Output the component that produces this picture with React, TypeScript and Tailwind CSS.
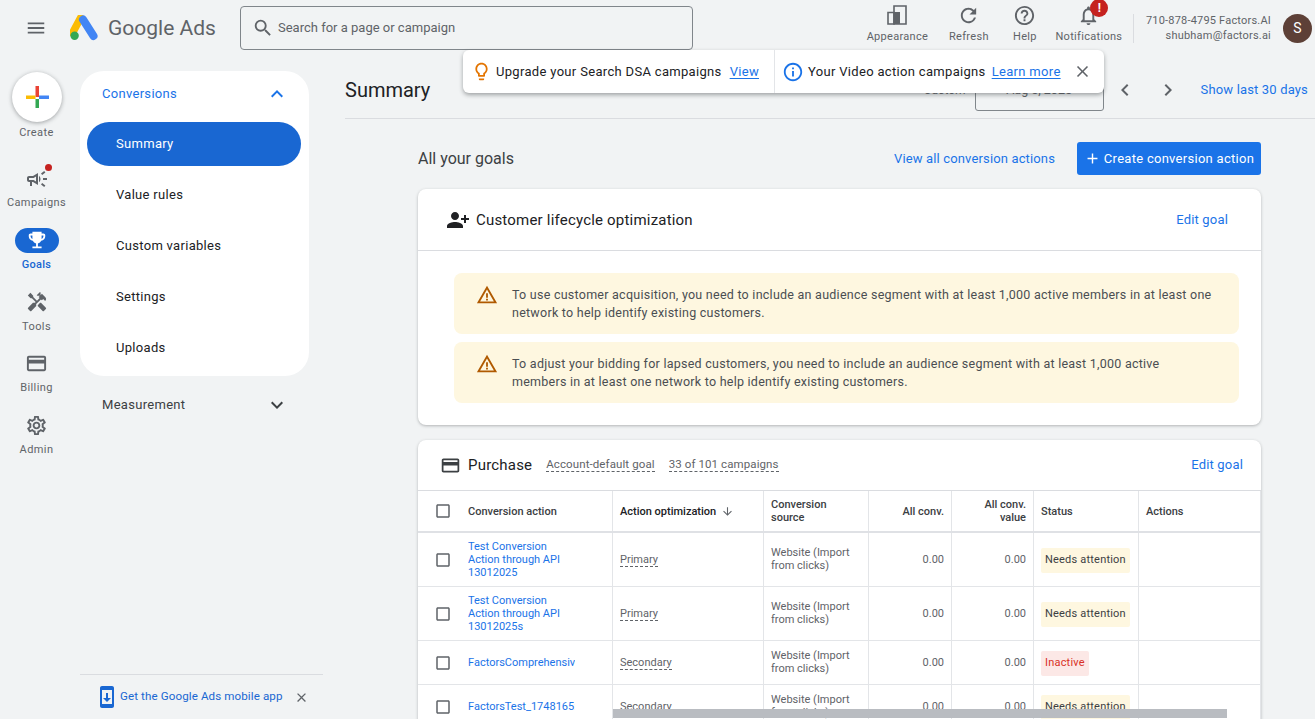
import React from "react";
import {
  MdAdd,
  MdArrowDownward,
  MdCheckBoxOutlineBlank,
  MdChevronLeft,
  MdChevronRight,
  MdClose,
  MdCreditCard,
  MdEmojiEvents,
  MdExpandLess,
  MdExpandMore,
  MdHandyman,
  MdHelpOutline,
  MdInfoOutline,
  MdLightbulbOutline,
  MdMenu,
  MdNotificationsNone,
  MdOutlineCampaign,
  MdOutlineSettings,
  MdPersonAdd,
  MdRefresh,
  MdSearch,
  MdSystemUpdate,
  MdWarningAmber,
} from "react-icons/md";

function AdsLogo() {
  return (
    <svg width="28" height="26" viewBox="0 0 28 26">
      <path d="M10.5 3 L2.5 18" stroke="#fbbc04" strokeWidth="7.5" strokeLinecap="round" />
      <path d="M13 4.5 L23.5 21" stroke="#4285f4" strokeWidth="8" strokeLinecap="round" />
      <circle cx="4.6" cy="20.7" r="4.2" fill="#34a853" />
    </svg>
  );
}

function ColorPlus() {
  return (
    <svg width="24" height="24" viewBox="0 0 24 24">
      <rect x="10.5" y="1" width="3.5" height="11" fill="#ea4335" />
      <rect x="14" y="10.5" width="10" height="3.5" fill="#4285f4" />
      <rect x="10.5" y="14" width="3.5" height="9" fill="#34a853" />
      <rect x="1" y="10.5" width="9.5" height="3.5" fill="#fbbc04" />
    </svg>
  );
}

function AppearanceIcon() {
  return (
    <svg width="20" height="20" viewBox="0 0 20 20" fill="#5f6368">
      <path d="M1 7.5h6V19H1z" fill="none" stroke="#5f6368" strokeWidth="1.6" />
      <path d="M7 1h12v18H7z" fill="none" stroke="#5f6368" strokeWidth="1.6" />
      <path d="M7 7h6v12H7z" />
    </svg>
  );
}

function RailItem({
  icon,
  label,
  active,
}: {
  icon: React.ReactNode;
  label: string;
  active?: boolean;
}) {
  return (
    <div className="flex h-[61.75px] flex-col items-center justify-start">
      <div
        className={
          active
            ? "flex h-[25px] w-[44px] items-center justify-center rounded-full bg-[#1967d2] text-white"
            : "flex h-[25px] w-[44px] items-center justify-center text-[#5f6368]"
        }
      >
        {icon}
      </div>
      <div
        className={
          active
            ? "mt-[4px] text-[11px] font-medium tracking-[0.3px] text-[#1967d2]"
            : "mt-[4px] text-[11px] tracking-[0.4px] text-[#5f6368]"
        }
      >
        {label}
      </div>
    </div>
  );
}

function HeaderAction({
  icon,
  label,
  badge,
}: {
  icon: React.ReactNode;
  label: string;
  badge?: boolean;
}) {
  return (
    <div className="relative mb-[6px] flex flex-col items-center text-[#5f6368]">
      <div className="flex h-[22px] items-center justify-center">{icon}</div>
      <div className="mt-[3px] text-[11px] tracking-[0.3px]">{label}</div>
      {badge && (
        <div className="absolute left-[35px] top-[-5px] flex h-[18px] w-[18px] items-center justify-center rounded-full bg-[#c5221f] text-[12px] font-bold text-white">
          !
        </div>
      )}
    </div>
  );
}

function Warning({ lines }: { lines: string[] }) {
  return (
    <div className="flex h-[61px] items-center rounded-[8px] bg-[#fef7e0] pl-[22px] pr-4">
      <MdWarningAmber className="mb-[18px] shrink-0 text-[#b05a00]" size={22} />
      <div className="ml-[14px] text-[12.5px] leading-[18px] tracking-[0.25px] text-[#4a4e52]">
        {lines.map((l) => (
          <div key={l}>{l}</div>
        ))}
      </div>
    </div>
  );
}

function Dashed({ children }: { children: React.ReactNode }) {
  return <span className="border-b border-dashed border-[#5f6368] leading-[13px]">{children}</span>;
}

const rows = [
  { h: "h-[54px]", name: ["Test Conversion", "Action through API", "13012025"], opt: "Primary", status: "Needs attention" },
  { h: "h-[54px]", name: ["Test Conversion", "Action through API", "13012025s"], opt: "Primary", status: "Needs attention" },
  { h: "h-[44px]", name: ["FactorsComprehensiv"], opt: "Secondary", status: "Inactive" },
  { h: "h-[44px]", name: ["FactorsTest_1748165:"], opt: "Secondary", status: "Needs attention" },
];

const gridCols = "grid grid-cols-[195px_151px_105px_83px_82px_105px_1fr]";
const cell = "flex items-center border-r border-[#e3e5e8] px-[7px]";

export default function App() {
  return (
    <div className="relative flex h-screen flex-col overflow-hidden bg-[#f1f3f4] font-['Roboto',sans-serif] text-[#202124]">
      {/* top bar */}
      <header className="flex h-[56px] shrink-0 items-center">
        <div className="flex w-[70px] justify-center pl-[1px] text-[#5f6368]">
          <MdMenu size={22} />
        </div>
        <AdsLogo />
        <div className="ml-[10px] mt-[2px] w-[132px] text-[21px] text-[#5f6368]">Google Ads</div>
        <div className="mt-[-1px] flex h-[44px] w-[453px] items-center rounded-[4px] border border-[#80868b] pl-[11px]">
          <MdSearch className="text-[#5f6368]" size={22} />
          <span className="ml-[4px] text-[13px] text-[#5f6368]">Search for a page or campaign</span>
        </div>
        <div className="ml-auto flex items-center">
          <div className="flex w-[73px] justify-center">
            <HeaderAction icon={<AppearanceIcon />} label="Appearance" />
          </div>
          <div className="flex w-[70px] justify-center">
            <HeaderAction icon={<MdRefresh size={23} />} label="Refresh" />
          </div>
          <div className="flex w-[42px] justify-center">
            <HeaderAction icon={<MdHelpOutline size={23} />} label="Help" />
          </div>
          <div className="ml-[5px] flex w-[76px] justify-center">
            <HeaderAction icon={<MdNotificationsNone size={23} />} label="Notifications" badge />
          </div>
          <div className="ml-[6px] h-[29px] w-px bg-[#dadce0]" />
          <div className="ml-[12px] text-right text-[11px] leading-[15px] tracking-[0.2px] text-[#5f6368]">
            <div>710-878-4795 Factors.AI</div>
            <div>shubham@factors.ai</div>
          </div>
          <div className="ml-[12px] mr-[3px] flex h-[29px] w-[29px] items-center justify-center rounded-full bg-[#5d4037] text-[14px] text-white">
            S
          </div>
        </div>
      </header>

      <div className="flex min-h-0 flex-1">
        {/* icon rail */}
        <div className="flex w-[73px] shrink-0 flex-col items-center pt-[16px]">
          <div className="flex h-[50px] w-[50px] items-center justify-center rounded-full bg-white shadow-[0_1px_4px_rgba(60,64,67,0.45)]">
            <ColorPlus />
          </div>
          <div className="mt-[3px] h-[41px] text-[11px] tracking-[0.4px] text-[#5f6368]">Create</div>
          <div className="relative">
            <RailItem icon={<MdOutlineCampaign size={24} />} label="Campaigns" />
            <div className="absolute left-[38px] top-[-2px] h-[7px] w-[7px] rounded-full bg-[#c5221f]" />
          </div>
          <RailItem icon={<MdEmojiEvents size={22} />} label="Goals" active />
          <RailItem icon={<MdHandyman size={22} />} label="Tools" />
          <RailItem icon={<MdCreditCard size={23} />} label="Billing" />
          <RailItem icon={<MdOutlineSettings size={23} />} label="Admin" />
        </div>

        {/* section nav */}
        <div className="flex w-[250px] shrink-0 flex-col pl-[7px]">
          <div className="mt-[15px] h-[305px] w-[229px] rounded-[24px] bg-white px-[7px]">
            <div className="flex h-[44px] items-center justify-between pl-[15px] pr-[13px] pt-[2px] text-[13px] tracking-[0.3px] text-[#1a73e8]">
              Conversions
              <MdExpandLess size={24} />
            </div>
            <div className="mt-[7px] flex h-[44px] w-[214px] items-center rounded-full bg-[#1967d2] pl-[29px] text-[13px] tracking-[0.3px] text-white">
              Summary
            </div>
            <div className="mt-[3px] flex flex-col text-[13px] tracking-[0.3px] text-[#202124]">
              {["Value rules", "Custom variables", "Settings", "Uploads"].map((t) => (
                <div key={t} className="flex h-[51px] items-center pl-[29px]">
                  {t}
                </div>
              ))}
            </div>
          </div>
          <div className="mt-[9px] flex h-[40px] w-[229px] items-center justify-between pl-[22px] pr-[20px] text-[13px] tracking-[0.3px] text-[#3c4043]">
            Measurement
            <MdExpandMore size={24} />
          </div>
          <div className="mt-auto flex h-[45px] w-[243px] items-center border-t border-[#dadce0] pl-[15px] text-[11.6px] tracking-[0.1px] text-[#1967d2]">
            <MdSystemUpdate className="shrink-0" size={24} />
            <span className="ml-[1px]">Get the Google Ads mobile app</span>
            <MdClose className="ml-[11px] text-[#5f6368]" size={15} />
          </div>
        </div>

        {/* main */}
        <div className="min-w-0 flex-1 pl-[22px]">
          <div className="flex h-[63px] items-center border-b border-[#dadce0]">
            <div className="mt-[6px] text-[20px] text-[#202124]">Summary</div>
            <div className="ml-auto mt-[6px] flex items-center pr-[7px]">
              <span className="mr-[9px] text-[12px] text-[#5f6368]">Custom</span>
              <div className="flex h-[42px] w-[129px] items-center justify-center rounded-[3px] border border-[#80868b] text-[12.5px] text-[#5f6368]">
                Aug 5, 2025
              </div>
              <MdChevronLeft className="ml-[9px] text-[#5f6368]" size={24} />
              <MdChevronRight className="ml-[19px] text-[#5f6368]" size={24} />
              <span className="ml-[21px] text-[13px] tracking-[0.16px] text-[#1a73e8]">Show last 30 days</span>
            </div>
          </div>

          <div className="pl-[73px] pr-[54px]">
            <div className="mt-[23px] flex h-[33px] items-center">
              <div className="text-[16px] text-[#3c4043]">All your goals</div>
              <div className="ml-auto text-[13px] tracking-[0.14px] text-[#1a73e8]">View all conversion actions</div>
              <div className="ml-[22px] flex h-[33px] w-[184px] items-center justify-center rounded-[3px] bg-[#1a73e8] text-[13px] tracking-[0.28px] text-white">
                <MdAdd className="mr-[3px]" size={17} />
                Create conversion action
              </div>
            </div>

            {/* lifecycle card */}
            <div className="mt-[14px] h-[236px] rounded-[8px] bg-white shadow-[0_1px_3px_rgba(60,64,67,0.35)]">
              <div className="flex h-[62px] items-center border-b border-[#dadce0] pl-[28px] pr-[33px]">
                <MdPersonAdd className="-scale-x-100 text-[#202124]" size={24} />
                <div className="ml-[6px] pt-[2px] text-[15px] tracking-[0.2px] text-[#202124]">
                  Customer lifecycle optimization
                </div>
                <div className="ml-auto text-[13px] tracking-[0.18px] text-[#1a73e8]">Edit goal</div>
              </div>
              <div className="flex flex-col gap-[8px] pl-[36px] pr-[22px] pt-[22px]">
                <Warning
                  lines={[
                    "To use customer acquisition, you need to include an audience segment with at least 1,000 active members in at least one",
                    "network to help identify existing customers.",
                  ]}
                />
                <Warning
                  lines={[
                    "To adjust your bidding for lapsed customers, you need to include an audience segment with at least 1,000 active",
                    "members in at least one network to help identify existing customers.",
                  ]}
                />
              </div>
            </div>

            {/* purchase card */}
            <div className="mt-[15px] rounded-t-[8px] bg-white shadow-[0_1px_3px_rgba(60,64,67,0.35)]">
              <div className="flex h-[51px] items-center border-b border-[#dadce0] pl-[22px] pr-[18px]">
                <MdCreditCard className="text-[#3c4043]" size={21} />
                <div className="ml-[7px] text-[15px] tracking-[0.2px] text-[#202124]">Purchase</div>
                <div className="ml-[14px] text-[11.5px] tracking-[0.1px] text-[#5f6368]">
                  <Dashed>Account-default goal</Dashed>
                </div>
                <div className="ml-[14px] text-[11.5px] tracking-[0.1px] text-[#5f6368]">
                  <Dashed>33 of 101 campaigns</Dashed>
                </div>
                <div className="ml-auto text-[13px] tracking-[0.18px] text-[#1a73e8]">Edit goal</div>
              </div>

              <div className={`${gridCols} h-[42px] border-b-2 border-[#dfe1e5] text-[11px] font-medium leading-[13px] text-[#3c4043]`}>
                <div className={`${cell} pl-[16px]`}>
                  <MdCheckBoxOutlineBlank className="text-[#5f6368]" size={18} />
                  <span className="ml-[16px]">Conversion action</span>
                </div>
                <div className={`${cell} text-[#202124]`}>
                  Action optimization
                  <MdArrowDownward className="ml-[5px] text-[#5f6368]" size={13} />
                </div>
                <div className={cell}>
                  Conversion
                  <br />
                  source
                </div>
                <div className={`${cell} justify-end`}>All conv.</div>
                <div className={`${cell} justify-end text-right`}>
                  All conv.
                  <br />
                  value
                </div>
                <div className={cell}>Status</div>
                <div className={cell}>Actions</div>
              </div>

              {rows.map((r, i) => (
                <div
                  key={i}
                  className={`${gridCols} ${r.h} border-b border-[#e3e5e8] text-[11px] text-[#5f6368]`}
                >
                  <div className={`${cell} pl-[16px]`}>
                    <MdCheckBoxOutlineBlank className="shrink-0 text-[#5f6368]" size={18} />
                    <div className="ml-[16px] w-[107px] overflow-hidden whitespace-nowrap pt-[2px] text-[11px] leading-[12.8px] text-[#1a73e8]">
                      {r.name.map((n) => (
                        <div key={n}>{n}</div>
                      ))}
                    </div>
                  </div>
                  <div className={cell}>
                    <Dashed>{r.opt}</Dashed>
                  </div>
                  <div className={`${cell} leading-[12.5px]`}>
                    <div>
                      Website (Import
                      <br />
                      from clicks)
                    </div>
                  </div>
                  <div className={`${cell} justify-end pt-[2px]`}>0.00</div>
                  <div className={`${cell} justify-end pt-[2px]`}>0.00</div>
                  <div className={`${cell} pt-[2px]`}>
                    <span
                      className={
                        r.status === "Inactive"
                          ? "whitespace-nowrap rounded-[2px] bg-[#fce8e6] px-[4px] py-[4px] tracking-[0.2px] text-[#d93025]"
                          : "whitespace-nowrap rounded-[2px] bg-[#fef7e0] px-[4px] py-[4px] tracking-[0.2px] text-[#3c4043]"
                      }
                    >
                      {r.status}
                    </span>
                  </div>
                  <div className={cell} />
                </div>
              ))}
            </div>
          </div>
        </div>
      </div>

      {/* floating notifications */}
      <div className="absolute left-[463px] top-[50px] flex h-[43px] w-[641px] items-center rounded-[6px] bg-white text-[13px] tracking-[0.32px] text-[#202124] shadow-[0_2px_4px_rgba(60,64,67,0.45)]">
        <div className="flex h-full w-[312px] items-center border-r border-[#e3e5e8] pl-[8px]">
          <MdLightbulbOutline className="text-[#e37400]" size={21} />
          <span className="ml-[4px]">Upgrade your Search DSA campaigns</span>
          <span className="ml-[8px] text-[#1a73e8] underline underline-offset-2">View</span>
        </div>
        <MdInfoOutline className="ml-[7px] text-[#1a73e8]" size={22} />
        <span className="ml-[4px]">Your Video action campaigns</span>
        <span className="ml-[6px] text-[#1a73e8] underline underline-offset-2">Learn more</span>
        <MdClose className="ml-[12px] text-[#5f6368]" size={19} />
      </div>

      {/* table scrollbar */}
      <div className="absolute left-[613px] top-[709px] h-[9px] w-[614px] bg-[#b9bcc1]" />
    </div>
  );
}
